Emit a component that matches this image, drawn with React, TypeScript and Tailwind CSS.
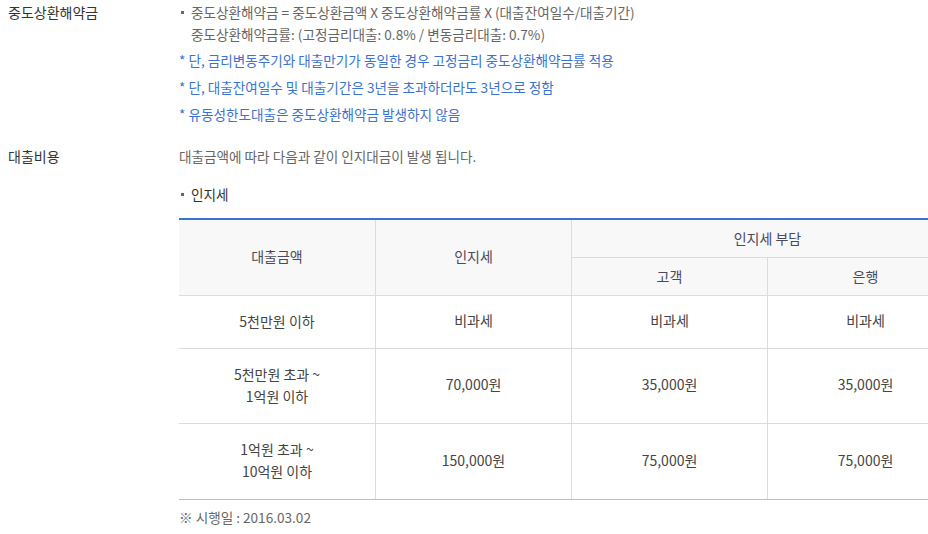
import React from 'react';

const font = { fontFamily: '"Malgun Gothic", "Noto Sans CJK KR", "Noto Sans", sans-serif' };

const rows = [
  { amount: ['5천만원 이하'], tax: '비과세', customer: '비과세', bank: '비과세', h: 'h-[53px]' },
  { amount: ['5천만원 초과 ~', '1억원 이하'], tax: '70,000원', customer: '35,000원', bank: '35,000원', h: 'h-[75px]' },
  { amount: ['1억원 초과 ~', '10억원 이하'], tax: '150,000원', customer: '75,000원', bank: '75,000원', h: 'h-[75px]' },
];

function Dot() {
  return <span className="inline-block w-[3px] h-[3px] bg-[#666] mr-[7px] ml-[2px] self-center" />;
}

function App() {
  return (
    <div className="w-[928px] h-[534px] overflow-hidden bg-white text-[13.6px]" style={font}>
      {/* 중도상환해약금 */}
      <div className="flex pt-[2px]">
        <div className="w-[179px] shrink-0 pl-2 text-[14px] leading-5 text-[#333]">중도상환해약금</div>
        <div className="flex flex-col text-[#666]">
          <div className="leading-[22px] -mt-[1px]">
            <div className="flex">
              <Dot />
              <span>중도상환해약금 = 중도상환금액 X 중도상환해약금률 X (대출잔여일수/대출기간)</span>
            </div>
            <div className="pl-[12px]">중도상환해약금률: (고정금리대출: 0.8% / 변동금리대출: 0.7%)</div>
          </div>
          <div className="text-[#3b73cf] leading-[22px]">
            <div className="mt-[4px]">* 단, 금리변동주기와 대출만기가 동일한 경우 고정금리 중도상환해약금률 적용</div>
            <div className="mt-[5px]">* 단, 대출잔여일수 및 대출기간은 3년을 초과하더라도 3년으로 정함</div>
            <div className="mt-[5px]">* 유동성한도대출은 중도상환해약금 발생하지 않음</div>
          </div>
        </div>
      </div>

      {/* 대출비용 */}
      <div className="flex mt-[21px]">
        <div className="w-[179px] shrink-0 pl-2 text-[14px] leading-5 text-[#333]">대출비용</div>
        <div className="flex flex-col">
          <div className="leading-5 text-[#666]">대출금액에 따라 다음과 같이 인지대금이 발생 됩니다.</div>
          <div className="flex mt-[18px] leading-5 text-[#333]">
            <Dot />
            <span>인지세</span>
          </div>
          <div className="mt-[14px] w-[784px] border-t-2 border-[#3a74cd] border-b border-b-[#b8bdd2] text-[14px] text-[#444]">
            <div className="grid grid-cols-[196px_196px_196px_196px] grid-rows-[38px_38px] bg-[#f8f8f8] text-[#4a4a5a]">
              <div className="row-span-2 flex items-center justify-center pb-[2px] border-b border-[#dcdcdc]">대출금액</div>
              <div className="row-span-2 flex items-center justify-center pb-[2px] border-b border-l border-[#dcdcdc]">인지세</div>
              <div className="col-span-2 flex items-center justify-center pb-[1px] border-b border-l border-[#dcdcdc]">인지세 부담</div>
              <div className="flex items-center justify-center pb-[1px] border-b border-l border-[#dcdcdc]">고객</div>
              <div className="flex items-center justify-center pb-[1px] border-b border-l border-[#dcdcdc]">은행</div>
            </div>
            {rows.map((r, i) => {
              const b = i === rows.length - 1 ? '' : 'border-b border-b-[#dcdcdc]';
              return (
                <div key={i} className={`grid grid-cols-[196px_196px_196px_196px] ${r.h}`}>
                  <div className={`flex flex-col items-center justify-center pb-[3px] leading-[22px] ${b}`}>
                    {r.amount.map((a) => (
                      <span key={a}>{a}</span>
                    ))}
                  </div>
                  <div className={`flex items-center justify-center pb-[3px] border-l border-l-[#dcdcdc] ${b}`}>{r.tax}</div>
                  <div className={`flex items-center justify-center pb-[3px] border-l border-l-[#dcdcdc] ${b}`}>{r.customer}</div>
                  <div className={`flex items-center justify-center pb-[3px] border-l border-l-[#dcdcdc] ${b}`}>{r.bank}</div>
                </div>
              );
            })}
          </div>
          <div className="mt-[7px] leading-5 text-[#666]">※ 시행일 : 2016.03.02</div>
        </div>
      </div>
    </div>
  );
}

export default App;
